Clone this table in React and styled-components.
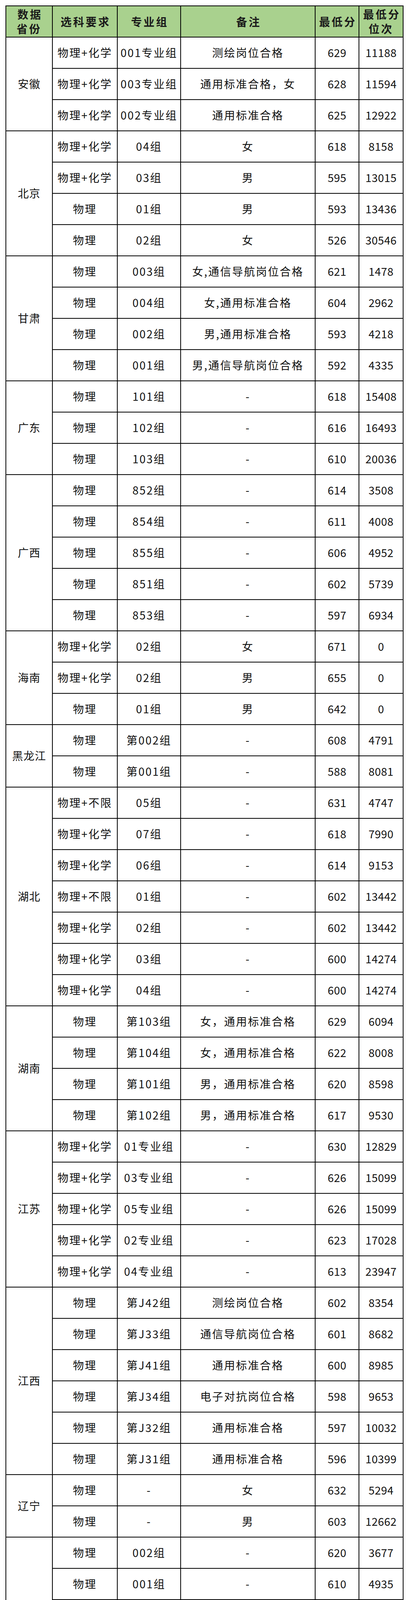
import React from 'react';
import styled, {createGlobalStyle} from 'styled-components';

const GlobalStyle = createGlobalStyle`
  html, body {
    margin: 0;
    padding: 0;
    background: #fff;
  }
  body {
    font-family: "Noto Sans CJK SC", "Noto Sans", sans-serif;
    color: #111;
  }
`;

const Page = styled.div`
  padding: 14px 14px 0 14px;
`;

// black background + 2px gaps draw the grid lines
const Table = styled.div`
  width: 1018px;
  box-sizing: border-box;
  display: grid;
  gap: 2px;
  padding: 2px;
  background: #000;
`;

const cols = '117px 164px 160px 342px 110px 111px';

const HeaderRow = styled.div`
  display: grid;
  grid-template-columns: ${cols};
  gap: 2px;
  height: 78px;
`;

const HeadCell = styled.div`
  background: #a9d18e;
  display: flex;
  align-items: center;
  justify-content: center;
  text-align: center;
  font-size: 28px;
  font-weight: 700;
  line-height: 37px;
  letter-spacing: 4px;
  text-indent: 4px;
  color: #1a1a1a;
`;

const RegionBlock = styled.div`
  display: grid;
  grid-template-columns: 117px 1fr;
  gap: 2px;
`;

const RegionLabel = styled.div`
  background: #fff;
  display: flex;
  align-items: center;
  justify-content: center;
  font-size: 28px;
  letter-spacing: 1px;
  line-height: 1.2;
  white-space: nowrap;
`;

const RowStack = styled.div`
  display: grid;
  gap: 2px;
`;

const DataRow = styled.div`
  display: grid;
  grid-template-columns: 164px 160px 342px 110px 111px;
  gap: 2px;
  height: 78px;
`;

const Cell = styled.div`
  background: #fff;
  display: flex;
  align-items: center;
  justify-content: center;
  font-size: 28px;
  line-height: 1.2;
  letter-spacing: ${p => (p.$num ? '0.5px' : '2.5px')};
  white-space: nowrap;
  overflow: hidden;
`;

const data = [
  ['安徽', [
    ['物理+化学', '001专业组', '测绘岗位合格', '629', '11188'],
    ['物理+化学', '003专业组', '通用标准合格，女', '628', '11594'],
    ['物理+化学', '002专业组', '通用标准合格', '625', '12922'],
  ]],
  ['北京', [
    ['物理+化学', '04组', '女', '618', '8158'],
    ['物理+化学', '03组', '男', '595', '13015'],
    ['物理', '01组', '男', '593', '13436'],
    ['物理', '02组', '女', '526', '30546'],
  ]],
  ['甘肃', [
    ['物理', '003组', '女,通信导航岗位合格', '621', '1478'],
    ['物理', '004组', '女,通用标准合格', '604', '2962'],
    ['物理', '002组', '男,通用标准合格', '593', '4218'],
    ['物理', '001组', '男,通信导航岗位合格', '592', '4335'],
  ]],
  ['广东', [
    ['物理', '101组', '-', '618', '15408'],
    ['物理', '102组', '-', '616', '16493'],
    ['物理', '103组', '-', '610', '20036'],
  ]],
  ['广西', [
    ['物理', '852组', '-', '614', '3508'],
    ['物理', '854组', '-', '611', '4008'],
    ['物理', '855组', '-', '606', '4952'],
    ['物理', '851组', '-', '602', '5739'],
    ['物理', '853组', '-', '597', '6934'],
  ]],
  ['海南', [
    ['物理+化学', '02组', '女', '671', '0'],
    ['物理+化学', '02组', '男', '655', '0'],
    ['物理', '01组', '男', '642', '0'],
  ]],
  ['黑龙江', [
    ['物理', '第002组', '-', '608', '4791'],
    ['物理', '第001组', '-', '588', '8081'],
  ]],
  ['湖北', [
    ['物理+不限', '05组', '-', '631', '4747'],
    ['物理+化学', '07组', '-', '618', '7990'],
    ['物理+化学', '06组', '-', '614', '9153'],
    ['物理+不限', '01组', '-', '602', '13442'],
    ['物理+化学', '02组', '-', '602', '13442'],
    ['物理+化学', '03组', '-', '600', '14274'],
    ['物理+化学', '04组', '-', '600', '14274'],
  ]],
  ['湖南', [
    ['物理', '第103组', '女，通用标准合格', '629', '6094'],
    ['物理', '第104组', '女，通用标准合格', '622', '8008'],
    ['物理', '第101组', '男，通用标准合格', '620', '8598'],
    ['物理', '第102组', '男，通用标准合格', '617', '9530'],
  ]],
  ['江苏', [
    ['物理+化学', '01专业组', '-', '630', '12829'],
    ['物理+化学', '03专业组', '-', '626', '15099'],
    ['物理+化学', '05专业组', '-', '626', '15099'],
    ['物理+化学', '02专业组', '-', '623', '17028'],
    ['物理+化学', '04专业组', '-', '613', '23947'],
  ]],
  ['江西', [
    ['物理', '第J42组', '测绘岗位合格', '602', '8354'],
    ['物理', '第J33组', '通信导航岗位合格', '601', '8682'],
    ['物理', '第J41组', '通用标准合格', '600', '8985'],
    ['物理', '第J34组', '电子对抗岗位合格', '598', '9653'],
    ['物理', '第J32组', '通用标准合格', '597', '10032'],
    ['物理', '第J31组', '通用标准合格', '596', '10399'],
  ]],
  ['辽宁', [
    ['物理', '-', '女', '632', '5294'],
    ['物理', '-', '男', '603', '12662'],
  ]],
  ['内蒙古', [
    ['物理', '002组', '-', '620', '3677'],
    ['物理', '001组', '-', '610', '4935'],
    ['物理', '003组', '-', '609', '5059'],
    ['物理', '005组', '-', '608', '5194'],
    ['物理', '004组', '-', '608', '5194'],
  ]],
  ['天津', [
    ['-', '03组', '-', '643', '4451'],
    ['-', '01组', '-', '630', '6564'],
    ['-', '04组', '-', '588', '15802'],
  ]],
  ['重庆', [
    ['物理', '-', '女', '626', '5142'],
    ['物理', '-', '男', '585', '16764'],
  ]],
];

export default function App() {
  return (
    <Page>
      <GlobalStyle />
      <Table>
        <HeaderRow>
          <HeadCell>数据<br />省份</HeadCell>
          <HeadCell>选科要求</HeadCell>
          <HeadCell>专业组</HeadCell>
          <HeadCell>备注</HeadCell>
          <HeadCell>最低分</HeadCell>
          <HeadCell>最低分<br />位次</HeadCell>
        </HeaderRow>
        {data.map(([region, rows]) => (
          <RegionBlock key={region}>
            <RegionLabel>{region}</RegionLabel>
            <RowStack>
              {rows.map((r, i) => (
                <DataRow key={i}>
                  <Cell>{r[0]}</Cell>
                  <Cell>{r[1]}</Cell>
                  <Cell>{r[2]}</Cell>
                  <Cell $num>{r[3]}</Cell>
                  <Cell $num>{r[4]}</Cell>
                </DataRow>
              ))}
            </RowStack>
          </RegionBlock>
        ))}
      </Table>
    </Page>
  );
}
